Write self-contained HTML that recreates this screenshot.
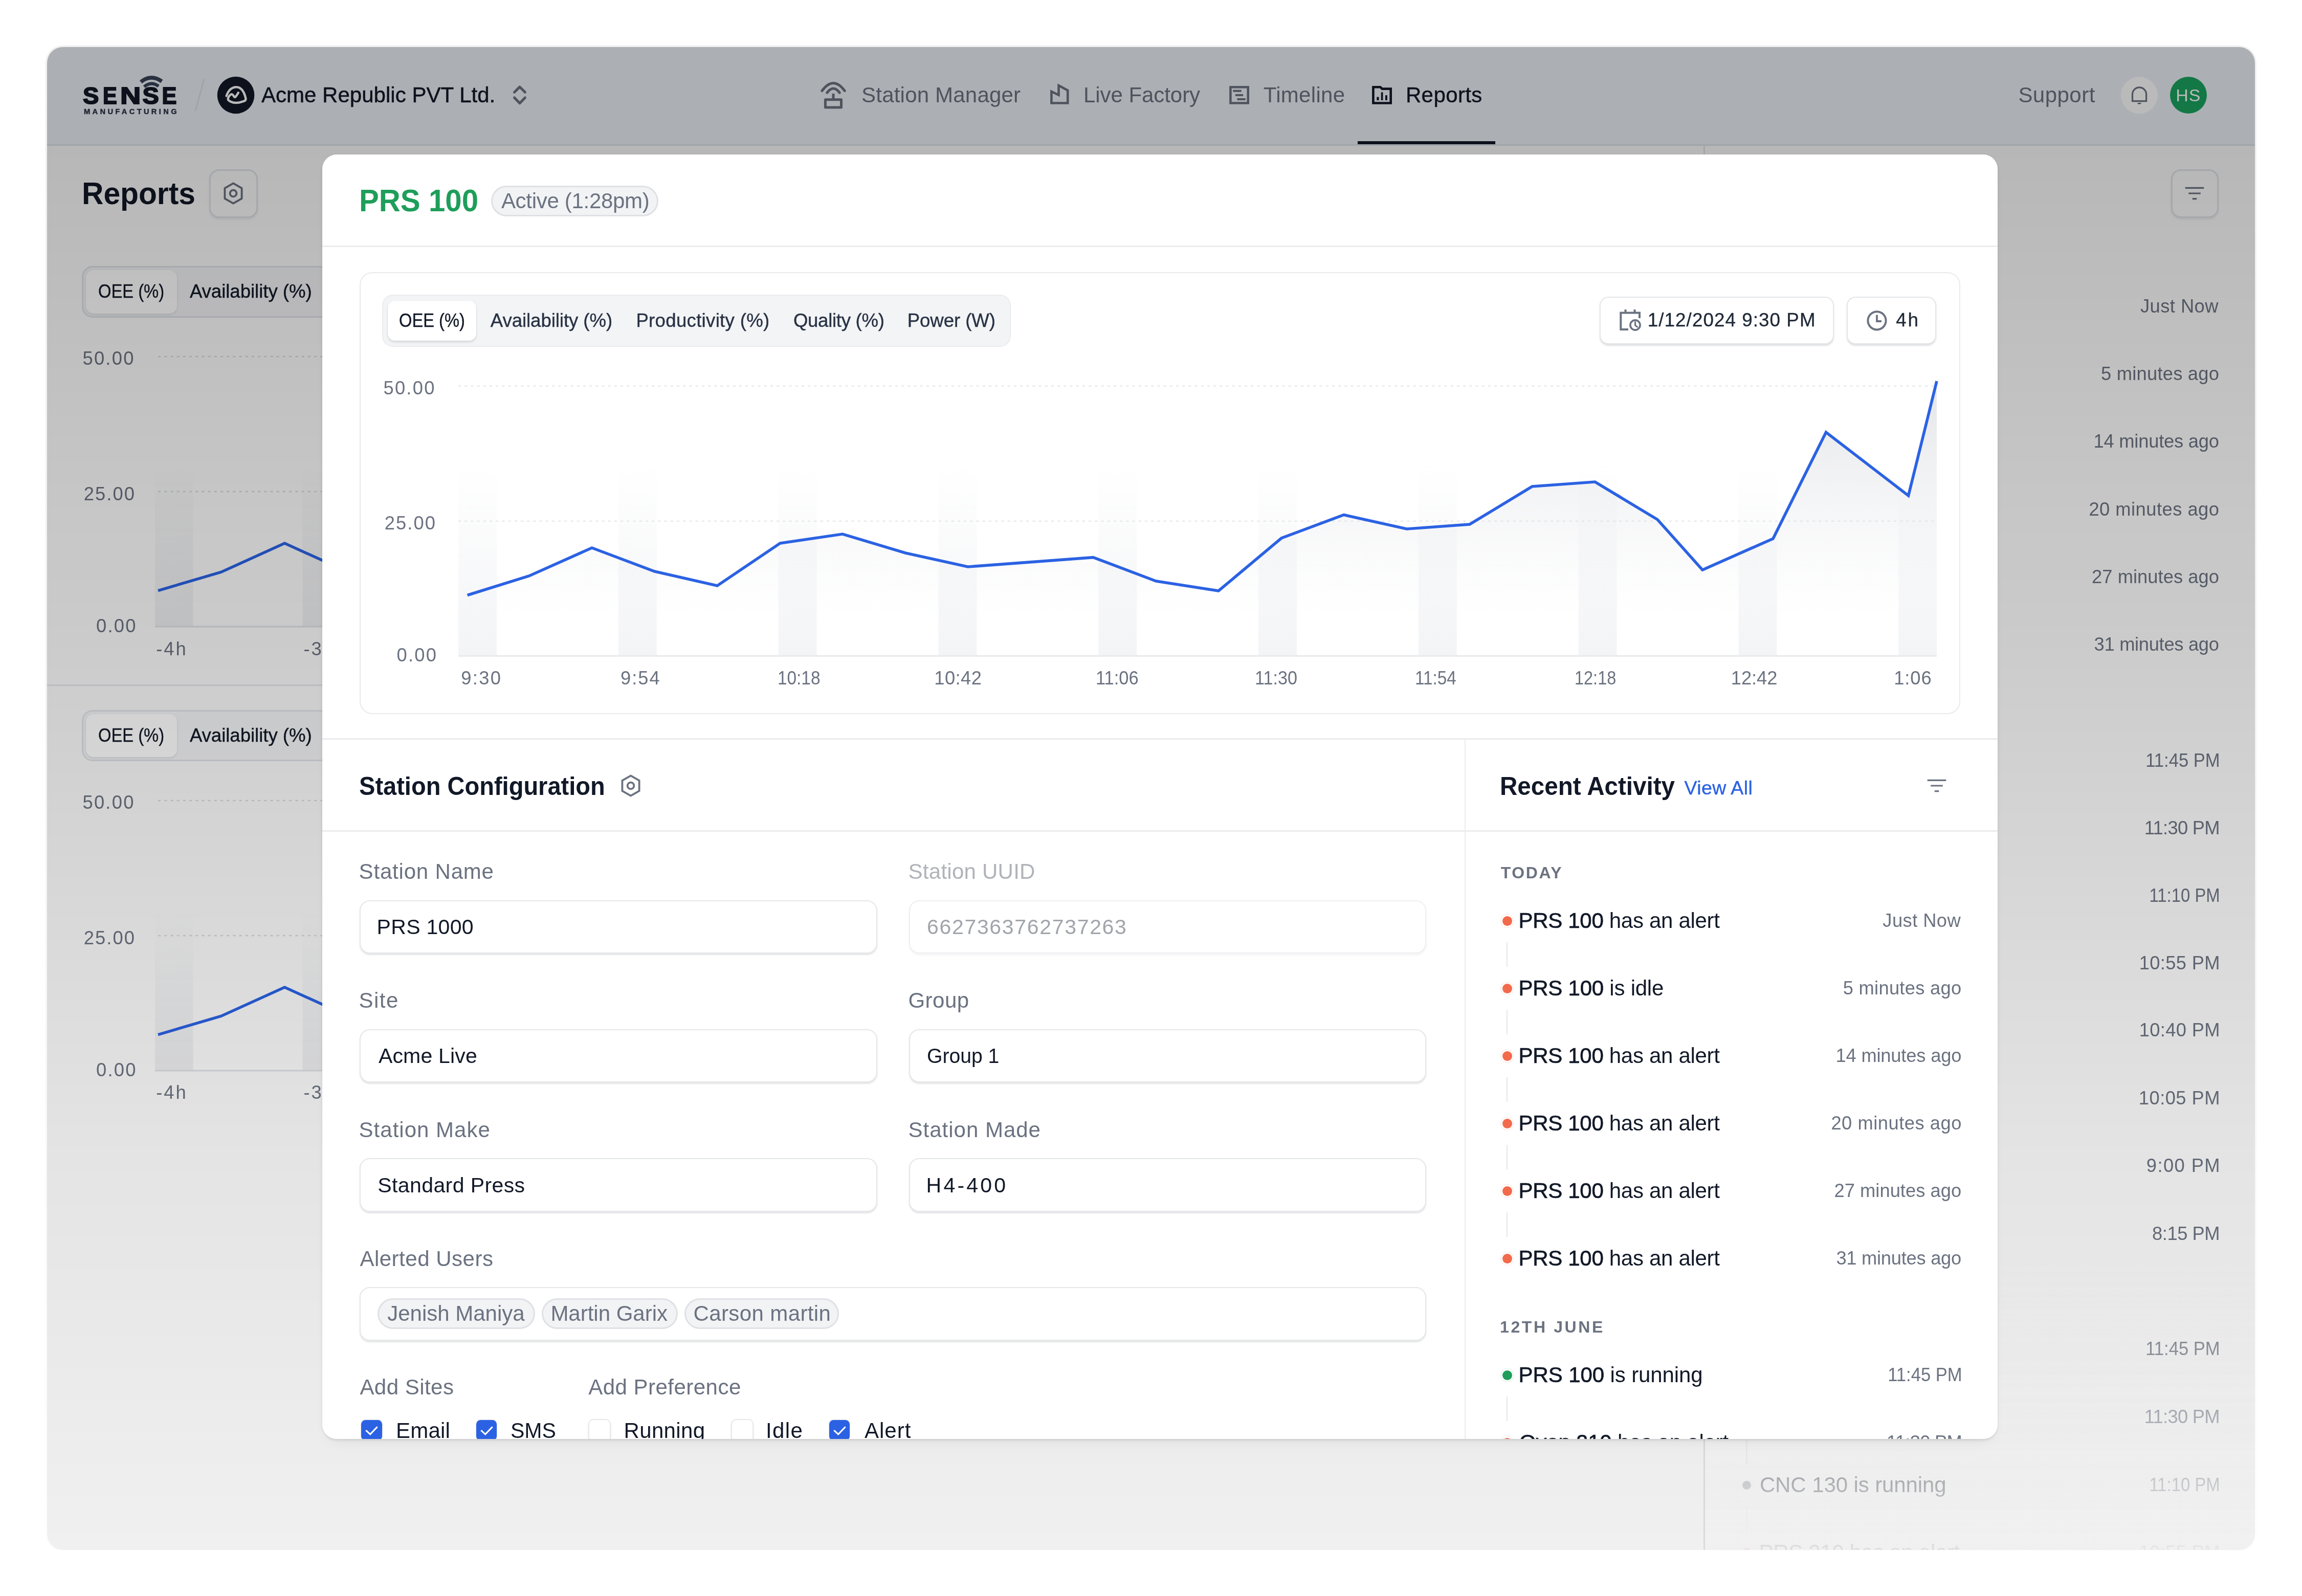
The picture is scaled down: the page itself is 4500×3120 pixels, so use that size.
<!DOCTYPE html>
<html><head><meta charset="utf-8"><title>Reports</title>
<style>
html,body{margin:0;padding:0}
body{width:4500px;height:3120px;background:#fff;position:relative;overflow:hidden;font-family:"Liberation Sans",sans-serif}
#app,#modal{position:absolute;overflow:hidden;will-change:transform}
#ring{position:absolute;left:89px;top:89px;width:4322px;height:2941.5px;border-radius:34px 34px 31px 31px;background:linear-gradient(to bottom,#efefef 0%,#f1f1f1 40%,#f8f8f8 75%,#fdfdfd 100%)}
#app{left:92px;top:92px;width:4316px;height:2938px;border-radius:31px;background:#fff}
#modal{left:630px;top:302px;width:3275px;height:2511px;border-radius:28px;background:#fff}
#mshadow{position:absolute;left:630px;top:302px;width:3275px;height:2511px;border-radius:28px;box-shadow:0 2.5px 5px rgba(0,0,0,.10),0 16px 30px -14px rgba(0,0,0,.07)}
#app>div,#app>span,#app>svg,#modal>div,#modal>span,#modal>svg{position:absolute;box-sizing:border-box}
span{white-space:pre;display:block}
svg{overflow:visible}
</style></head><body>
<div id="ring"></div>
<div id="app">
<div style="left:0.0px;top:0.0px;width:4316.0px;height:189.6px;background:#ecf2f7;border-bottom:3px solid #dde2e9;box-sizing:content-box"></div>
<svg style="left:58.0px;top:48.0px;" width="210.0" height="90.0" viewBox="150.0 140.0 210.0 90.0"><g fill="#111827" stroke="#111827" stroke-width="2" stroke-linejoin="miter" font-family='"Liberation Sans",sans-serif' font-weight="700"><text transform="translate(162.0,202.9) scale(1.03,1)" font-size="45.6">S</text><text transform="translate(201.1,202.9) scale(0.912,1)" font-size="45.6">E</text><text transform="translate(234.9,202.9) scale(1.222,1)" font-size="45.6">N</text><text transform="translate(278.6,202.9) scale(1.062,1)" font-size="45.6">S</text><text transform="translate(316.6,202.9) scale(0.95,1)" font-size="45.6">E</text></g>
<g font-family='"Liberation Sans",sans-serif' font-weight="700"><text x="164" y="222.6" font-size="14.6" textLength="181.5" lengthAdjust="spacing" fill="#2b3345" stroke="#2b3345" stroke-width="0.45">MANUFACTURING</text></g>
<g fill="none" stroke="#3a445a" stroke-linecap="butt">
<path d="M275.3,160.2 Q295.5,144.2 316.2,159.2" stroke-width="7.6"/>
<path d="M281.8,169.6 Q295.5,158 310,168.6" stroke-width="6.2"/>
</g></svg>
<svg style="left:283.0px;top:58.0px;" width="30.0" height="72.0" viewBox="375.0 150.0 30.0 72.0"><line x1="399" y1="154.5" x2="382" y2="217" stroke="#d9dee6" stroke-width="2.5"/></svg>
<svg style="left:328.0px;top:53.0px;" width="82.0" height="82.0" viewBox="420.0 145.0 82.0 82.0"><circle cx="461" cy="186" r="36.3" fill="#111827"/>
<path d="M442.6,187.6 C446,178 452,170.3 462,170.3 C472,170.3 477.5,180 480.4,192.6 C481,195.5 478,197.6 474,198.6 C466,201.4 457,201.6 451,198.7 C447.5,197 445,194.8 445.7,192.6 C447,188.8 449.8,185.2 452.2,184.2 C454.2,183.6 455.2,185.4 456.5,187.2 C457.8,189.2 458.8,190.6 460,189.6 C462.2,187.4 464,184.2 465.9,181.2" fill="none" stroke="#fff" stroke-width="4.4" stroke-linecap="round" stroke-linejoin="round"/></svg>
<span style="left:418.9px;top:73.1px;font-size:42px;line-height:42px;color:#111827;letter-spacing:0.03px;-webkit-text-stroke:0.5px #111827;">Acme Republic PVT Ltd.</span>
<svg style="left:908.0px;top:68.0px;" width="32.0" height="52.0" viewBox="1000.0 160.0 32.0 52.0"><path d="M1005.5,180.3 L1016,169.9 L1026.4,180.3 M1005.5,191 L1016,201.8 L1026.4,191" fill="none" stroke="#6b7280" stroke-width="5" stroke-linecap="round" stroke-linejoin="round"/></svg>
<svg style="left:1506.0px;top:60.0px;" width="62.0" height="66.0" viewBox="1598.0 152.0 62.0 66.0"><g fill="none" stroke="#6b7280" stroke-width="5">
<path d="M1606.9,177.6 Q1629,147.4 1651.2,177.6" stroke-linecap="round"/>
<path d="M1616.8,181.2 Q1629,165 1641.2,181.2" stroke-linecap="round"/>
<path d="M1629,183 V194"/>
<rect x="1613.4" y="194.7" width="31.1" height="15.3" stroke-linejoin="round"/></g></svg>
<span style="left:1592.1px;top:73.1px;font-size:42px;line-height:42px;color:#6b7280;letter-spacing:0.20px;">Station Manager</span>
<svg style="left:1954.0px;top:66.0px;" width="50.0" height="52.0" viewBox="2046.0 158.0 50.0 52.0"><path d="M2055.4,178.9 V201.5 H2087.2 V176.7 L2069.5,167.1 V185.7 Z" fill="none" stroke="#6b7280" stroke-width="4.6" stroke-linejoin="miter"/></svg>
<span style="left:2026.0px;top:73.1px;font-size:42px;line-height:42px;color:#6b7280;letter-spacing:-0.06px;">Live Factory</span>
<svg style="left:2306.0px;top:70.0px;" width="50.0" height="46.0" viewBox="2398.0 162.0 50.0 46.0"><g fill="none" stroke="#6b7280" stroke-width="4.5"><rect x="2405.4" y="170.3" width="34.3" height="31.2"/>
<path d="M2410.3,177.8 H2426.7 M2414.9,186 H2430.1 M2418.4,194 H2434.7" stroke-width="4"/></g></svg>
<span style="left:2377.8px;top:73.1px;font-size:42px;line-height:42px;color:#6b7280;letter-spacing:0.30px;">Timeline</span>
<svg style="left:2584.0px;top:70.0px;" width="52.0" height="46.0" viewBox="2676.0 162.0 52.0 46.0"><path d="M2684.4,170.2 H2698.4 L2701.7,173.6 H2718.7 V201.5 H2684.4 Z" fill="none" stroke="#111827" stroke-width="4.6" stroke-linejoin="miter"/>
<g fill="#111827"><rect x="2691.3" y="189.6" width="4.2" height="6.4"/><rect x="2699.8" y="180.3" width="3.6" height="15.7"/><rect x="2708" y="186.2" width="3.9" height="9.8"/></g></svg>
<span style="left:2655.9px;top:73.1px;font-size:42px;line-height:42px;color:#111827;letter-spacing:0.40px;-webkit-text-stroke:0.4px #111827;">Reports</span>
<div style="left:2561.6px;top:184.0px;width:269.4px;height:6.0px;background:#111827"></div>
<span style="left:3853.4px;top:73.1px;font-size:42px;line-height:42px;color:#6b7280;letter-spacing:0.47px;">Support</span>
<svg style="left:4048.0px;top:53.0px;" width="85.0" height="85.0" viewBox="4140.0 145.0 85.0 85.0"><circle cx="4181.8" cy="186.3" r="36" fill="#ffffff"/>
<path d="M4168.5,197.6 V184.4 A13.55,13.55 0 0 1 4195.6,184.4 V197.6 Z" fill="none" stroke="#6b7280" stroke-width="3.2" stroke-linejoin="miter"/>
<path d="M4177.6,201.2 H4186.4 Q4182,206.5 4177.6,201.2 Z" fill="#4b5563"/></svg>
<div style="left:4150.0px;top:58.0px;width:72.0px;height:72.0px;background:#1ba561;border-radius:50%"></div>
<span style="left:4161.2px;top:77.0px;font-size:34px;line-height:34px;color:#fff;letter-spacing:1.08px;">HS</span>
<div style="left:0.0px;top:192.6px;width:4316.0px;height:2745.4px;background:#fbfbfb"></div>
<span style="left:68.4px;top:256.4px;font-size:61px;line-height:61px;color:#111827;font-weight:700;transform:scaleX(0.9631);transform-origin:left center;">Reports</span>
<div style="left:316.5px;top:238.5px;width:95.0px;height:95.0px;border:3px solid #dfe3e9;border-radius:19px;box-shadow:0 3px 4px rgba(16,24,40,.07);background:#fbfbfb"></div>
<svg style="left:338.0px;top:258.0px;" width="52.0" height="56.0" viewBox="430.0 350.0 52.0 56.0"><path d="M456.0,358.4 L472.6,367.8 L472.6,388.2 L456.0,397.6 L439.4,388.2 L439.4,367.8 Z" fill="none" stroke="#6b7280" stroke-width="3.8" stroke-linejoin="miter"/><circle cx="456" cy="378" r="6.4" fill="none" stroke="#6b7280" stroke-width="3.8"/></svg>
<div style="left:68.0px;top:428.0px;width:1240.0px;height:100.5px;background:#f3f4f6;border:3px solid #dde1e7;border-radius:21px"></div>
<div style="left:76.0px;top:436.0px;width:178.0px;height:84.5px;background:#fff;border-radius:15px;box-shadow:0 2px 5px rgba(16,24,40,.10)"></div>
<span style="left:100.4px;top:460.0px;font-size:36.6px;line-height:36.6px;color:#111827;transform:scaleX(0.8942);transform-origin:left center;-webkit-text-stroke:0.4px #111827;">OEE (%)</span>
<span style="left:278.9px;top:460.0px;font-size:36.6px;line-height:36.6px;color:#111827;letter-spacing:-0.03px;-webkit-text-stroke:0.4px #111827;">Availability (%)</span>
<span style="left:69.5px;top:591.3px;font-size:36.3px;line-height:36.3px;color:#6b7280;letter-spacing:2.25px;">50.00</span>
<span style="left:71.7px;top:856.0px;font-size:36.3px;line-height:36.3px;color:#6b7280;letter-spacing:2.09px;">25.00</span>
<span style="left:96.0px;top:1114.3px;font-size:36.3px;line-height:36.3px;color:#6b7280;letter-spacing:2.23px;">0.00</span>
<span style="left:213.2px;top:1158.8px;font-size:36.3px;line-height:36.3px;color:#6b7280;letter-spacing:2.99px;">-4h</span>
<span style="left:501.4px;top:1158.8px;font-size:36.3px;line-height:36.3px;color:#6b7280;letter-spacing:2.99px;">-3h</span>
<svg style="left:203.0px;top:588.0px;" width="1110.0" height="555.0" viewBox="295.0 680.0 1110.0 555.0"><defs><linearGradient id="bgs0" gradientUnits="userSpaceOnUse" x1="0" y1="905" x2="0" y2="1225"><stop offset="0" stop-color="#ecedef" stop-opacity="0"/><stop offset="1" stop-color="#ecedef" stop-opacity="1"/></linearGradient></defs>
<rect x="303" y="905" width="74.5" height="320" fill="url(#bgs0)"/>
<rect x="591.5" y="905" width="74.5" height="320" fill="url(#bgs0)"/>
<path d="M309,697 H1400 M309,961 H1400" stroke="#d5d8dd" stroke-width="2.5" stroke-dasharray="5 7.2" fill="none"/>
<path d="M303,1225 H1400" stroke="#dcdfe4" stroke-width="3" fill="none"/>
<path d="M309,1154.6 L432,1118.5 L556.4,1062 L680,1118" stroke="#2b62e3" stroke-width="5.5" fill="none" stroke-linejoin="miter"/></svg>
<div style="left:0.0px;top:1246.0px;width:3239.0px;height:2.5px;background:#e3e5e9"></div>
<div style="left:68.0px;top:1295.5px;width:1240.0px;height:100.5px;background:#f3f4f6;border:3px solid #dde1e7;border-radius:21px"></div>
<div style="left:76.0px;top:1303.5px;width:178.0px;height:84.5px;background:#fff;border-radius:15px;box-shadow:0 2px 5px rgba(16,24,40,.10)"></div>
<span style="left:100.4px;top:1327.5px;font-size:36.6px;line-height:36.6px;color:#111827;transform:scaleX(0.8942);transform-origin:left center;-webkit-text-stroke:0.4px #111827;">OEE (%)</span>
<span style="left:278.9px;top:1327.5px;font-size:36.6px;line-height:36.6px;color:#111827;letter-spacing:-0.03px;-webkit-text-stroke:0.4px #111827;">Availability (%)</span>
<span style="left:69.5px;top:1458.8px;font-size:36.3px;line-height:36.3px;color:#6b7280;letter-spacing:2.25px;">50.00</span>
<span style="left:71.7px;top:1723.5px;font-size:36.3px;line-height:36.3px;color:#6b7280;letter-spacing:2.09px;">25.00</span>
<span style="left:96.0px;top:1981.8px;font-size:36.3px;line-height:36.3px;color:#6b7280;letter-spacing:2.23px;">0.00</span>
<span style="left:213.2px;top:2026.3px;font-size:36.3px;line-height:36.3px;color:#6b7280;letter-spacing:2.99px;">-4h</span>
<span style="left:501.4px;top:2026.3px;font-size:36.3px;line-height:36.3px;color:#6b7280;letter-spacing:2.99px;">-3h</span>
<svg style="left:203.0px;top:1455.5px;" width="1110.0" height="555.0" viewBox="295.0 1547.5 1110.0 555.0"><defs><linearGradient id="bgs867.5" gradientUnits="userSpaceOnUse" x1="0" y1="1772.5" x2="0" y2="2092.5"><stop offset="0" stop-color="#ecedef" stop-opacity="0"/><stop offset="1" stop-color="#ecedef" stop-opacity="1"/></linearGradient></defs>
<rect x="303" y="1772.5" width="74.5" height="320" fill="url(#bgs867.5)"/>
<rect x="591.5" y="1772.5" width="74.5" height="320" fill="url(#bgs867.5)"/>
<path d="M309,1564.5 H1400 M309,1828.5 H1400" stroke="#d5d8dd" stroke-width="2.5" stroke-dasharray="5 7.2" fill="none"/>
<path d="M303,2092.5 H1400" stroke="#dcdfe4" stroke-width="3" fill="none"/>
<path d="M309,2022.1 L432,1986.0 L556.4,1929.5 L680,1985.5" stroke="#2b62e3" stroke-width="5.5" fill="none" stroke-linejoin="miter"/></svg>
<div style="left:3238.0px;top:192.6px;width:2.5px;height:2745.4px;background:#e3e5e9"></div>
<div style="left:4151.5px;top:238.5px;width:93.5px;height:95.0px;border:3px solid #dfe3e9;border-radius:19px;box-shadow:0 3px 4px rgba(16,24,40,.07);background:#fbfbfb"></div>
<svg style="left:4176.3px;top:269.8px;" width="44.0" height="32.0" viewBox="4268.3 361.8 44.0 32.0"><path d="M4272.0,367.2 H4308.6 M4278.5,377.8 H4302.1 M4286.1,388.40000000000003 H4294.5" stroke="#6b7280" stroke-width="3.2" fill="none"/></svg>
<span style="left:4092.0px;top:488.9px;font-size:36.3px;line-height:36.3px;color:#6b7280;letter-spacing:0.45px;">Just Now</span>
<span style="left:4015.0px;top:620.9px;font-size:36.3px;line-height:36.3px;color:#6b7280;letter-spacing:0.24px;">5 minutes ago</span>
<span style="left:4000.5px;top:753.4px;font-size:36.3px;line-height:36.3px;color:#6b7280;letter-spacing:-0.21px;">14 minutes ago</span>
<span style="left:3991.4px;top:885.6px;font-size:36.3px;line-height:36.3px;color:#6b7280;letter-spacing:0.49px;">20 minutes ago</span>
<span style="left:3997.1px;top:1017.9px;font-size:36.3px;line-height:36.3px;color:#6b7280;letter-spacing:0.05px;">27 minutes ago</span>
<span style="left:4001.6px;top:1149.9px;font-size:36.3px;line-height:36.3px;color:#6b7280;letter-spacing:-0.30px;">31 minutes ago</span>
<span style="left:4094.7px;top:1376.9px;font-size:36.3px;line-height:36.3px;color:#6b7280;transform:scaleX(0.9528);transform-origin:right center;">11:45 PM</span>
<span style="left:4099.8px;top:1508.9px;font-size:36.3px;line-height:36.3px;color:#6b7280;letter-spacing:-0.71px;">11:30 PM</span>
<span style="left:4094.6px;top:1640.6px;font-size:36.3px;line-height:36.3px;color:#6b7280;transform:scaleX(0.9052);transform-origin:right center;">11:10 PM</span>
<span style="left:4089.8px;top:1772.9px;font-size:36.3px;line-height:36.3px;color:#6b7280;letter-spacing:0.34px;">10:55 PM</span>
<span style="left:4089.8px;top:1904.3px;font-size:36.3px;line-height:36.3px;color:#6b7280;letter-spacing:0.34px;">10:40 PM</span>
<span style="left:4088.8px;top:2036.9px;font-size:36.3px;line-height:36.3px;color:#6b7280;letter-spacing:0.48px;">10:05 PM</span>
<span style="left:4103.8px;top:2168.6px;font-size:36.3px;line-height:36.3px;color:#6b7280;letter-spacing:1.42px;">9:00 PM</span>
<span style="left:4115.0px;top:2301.5px;font-size:36.3px;line-height:36.3px;color:#6b7280;letter-spacing:-0.44px;">8:15 PM</span>
<span style="left:4094.7px;top:2526.9px;font-size:36.3px;line-height:36.3px;color:#6b7280;transform:scaleX(0.9528);transform-origin:right center;">11:45 PM</span>
<span style="left:4099.8px;top:2659.9px;font-size:36.3px;line-height:36.3px;color:#6b7280;letter-spacing:-0.71px;">11:30 PM</span>
<span style="left:4094.6px;top:2792.9px;font-size:36.3px;line-height:36.3px;color:#6b7280;transform:scaleX(0.9052);transform-origin:right center;">11:10 PM</span>
<span style="left:4089.8px;top:2924.9px;font-size:36.3px;line-height:36.3px;color:#6b7280;letter-spacing:0.34px;">10:55 PM</span>
<div style="left:3321.0px;top:2723.0px;width:2.5px;height:47.0px;background:#e5e7eb"></div>
<div style="left:3313.5px;top:2802.5px;width:17.0px;height:17.0px;background:#7d828a;border-radius:50%"></div>
<span style="left:3347.9px;top:2790.4px;font-size:42px;line-height:42px;color:#111827;letter-spacing:-0.10px;">CNC 130 is running</span>
<div style="left:3321.0px;top:2853.0px;width:2.5px;height:48.0px;background:#e5e7eb"></div>
<div style="left:3312.5px;top:2933.5px;width:19.0px;height:19.0px;background:#f26a4b;border-radius:50%"></div>
<span style="left:3346.5px;top:2922.4px;font-size:42px;line-height:42px;color:#111827;letter-spacing:-0.34px;">PRS 210 has an alert</span>
<div style="left:3241.0px;top:2378.0px;width:1075.0px;height:560.0px;background:linear-gradient(to bottom,rgba(251,251,251,0) 0%,rgba(251,251,251,.92) 100%)"></div>
<div style="left:0.0px;top:0.0px;width:4316.0px;height:192.6px;background:rgba(0,0,0,.27)"></div>
<div style="left:0.0px;top:192.6px;width:4316.0px;height:2745.4px;background:linear-gradient(to bottom,rgba(0,0,0,.27) 0%,rgba(0,0,0,.187) 35%,rgba(0,0,0,.092) 72%,rgba(0,0,0,.052) 95%,rgba(0,0,0,.045) 100%)"></div>
</div>
<div id="mshadow"></div>
<div id="modal">
<span style="left:72.1px;top:60.4px;font-size:61px;line-height:61px;color:#1e9e5a;font-weight:700;transform:scaleX(0.9544);transform-origin:left center;">PRS 100</span>
<div style="left:329.5px;top:61.0px;width:327.5px;height:59.5px;background:#f2f3f5;border:3px solid #dfe1e5;border-radius:30px"></div>
<span style="left:349.9px;top:70.0px;font-size:42px;line-height:42px;color:#6b7280;letter-spacing:-0.30px;">Active (1:28pm)</span>
<div style="left:0.0px;top:178.3px;width:3275.0px;height:2.5px;background:#ececee"></div>
<div style="left:73.0px;top:230.0px;width:3129.0px;height:864.0px;border:2.5px solid #e9eaec;border-radius:25px"></div>
<div style="left:117.0px;top:274.4px;width:1229.0px;height:101.3px;background:#f3f4f6;border:2.5px solid #ebecef;border-radius:21px"></div>
<div style="left:128.4px;top:286.0px;width:172.4px;height:77.7px;background:#fff;border-radius:14px;box-shadow:0 3px 4px rgba(16,24,40,.13),0 0 0 1px rgba(16,24,40,.03)"></div>
<span style="left:150.4px;top:306.8px;font-size:36.6px;line-height:36.6px;color:#111827;transform:scaleX(0.8928);transform-origin:left center;-webkit-text-stroke:0.4px #111827;">OEE (%)</span>
<span style="left:328.8px;top:306.8px;font-size:36.6px;line-height:36.6px;color:#283244;letter-spacing:-0.06px;-webkit-text-stroke:0.4px #283244;">Availability (%)</span>
<span style="left:613.4px;top:306.8px;font-size:36.6px;line-height:36.6px;color:#283244;letter-spacing:0.31px;-webkit-text-stroke:0.4px #283244;">Productivity (%)</span>
<span style="left:920.9px;top:306.8px;font-size:36.6px;line-height:36.6px;color:#283244;letter-spacing:-0.29px;-webkit-text-stroke:0.4px #283244;">Quality (%)</span>
<span style="left:1143.7px;top:306.8px;font-size:36.6px;line-height:36.6px;color:#283244;letter-spacing:-0.06px;-webkit-text-stroke:0.4px #283244;">Power (W)</span>
<div style="left:2496.5px;top:277.8px;width:458.0px;height:93.2px;background:#fff;border:2.5px solid #e4e6e9;border-radius:17px;box-shadow:0 2.5px 3px rgba(16,24,40,.13)"></div>
<div style="left:2980.2px;top:277.8px;width:174.8px;height:93.2px;background:#fff;border:2.5px solid #e4e6e9;border-radius:17px;box-shadow:0 2.5px 3px rgba(16,24,40,.13)"></div>
<svg style="left:2530.0px;top:296.0px;" width="54.0" height="54.0" viewBox="3160.0 598.0 54.0 54.0"><g fill="none" stroke="#6b7280" stroke-width="4">
<path d="M3183,644 H3168.3 V611.5 H3205 V622"/>
<path d="M3177.5,605 V613 M3195.5,605 V613" stroke-linecap="butt"/>
<circle cx="3196.5" cy="635.5" r="9.6" stroke-width="3.6"/>
<path d="M3196.5,629.5 V636 L3200.5,639" stroke-width="3" stroke-linecap="round" stroke-linejoin="round"/></g></svg>
<span style="left:2590.8px;top:306.4px;font-size:36.8px;line-height:36.8px;color:#1f2937;letter-spacing:1.05px;-webkit-text-stroke:0.35px #1f2937;">1/12/2024 9:30 PM</span>
<svg style="left:3015.0px;top:301.0px;" width="48.0" height="48.0" viewBox="3645.0 603.0 48.0 48.0"><g fill="none" stroke="#6b7280" stroke-width="4"><circle cx="3669" cy="626.8" r="17.6"/><path d="M3669,615.5 V628 H3678" stroke-width="3.8" stroke-linejoin="miter"/></g></svg>
<span style="left:3076.2px;top:306.4px;font-size:36.8px;line-height:36.8px;color:#1f2937;letter-spacing:2.73px;-webkit-text-stroke:0.35px #1f2937;">4h</span>
<span style="left:119.5px;top:439.3px;font-size:36.3px;line-height:36.3px;color:#6b7280;letter-spacing:2.25px;">50.00</span>
<span style="left:121.7px;top:702.6px;font-size:36.3px;line-height:36.3px;color:#6b7280;letter-spacing:2.09px;">25.00</span>
<span style="left:145.5px;top:960.8px;font-size:36.3px;line-height:36.3px;color:#6b7280;letter-spacing:2.23px;">0.00</span>
<svg style="left:260.0px;top:433.0px;" width="2905.0" height="555.0" viewBox="890.0 735.0 2905.0 555.0"><defs>
<linearGradient id="st" gradientUnits="userSpaceOnUse" x1="0" y1="905" x2="0" y2="1282"><stop offset="0" stop-color="#f3f4f6" stop-opacity="0"/><stop offset="1" stop-color="#f3f4f6" stop-opacity="1"/></linearGradient>
<linearGradient id="ar" gradientUnits="userSpaceOnUse" x1="0" y1="745" x2="0" y2="1200"><stop offset="0" stop-color="#d2d3d7" stop-opacity=".60"/><stop offset="1" stop-color="#e5e7eb" stop-opacity="0"/></linearGradient></defs>
<rect x="896.0" y="905" width="75" height="377" fill="url(#st)"/><rect x="1208.8" y="905" width="75" height="377" fill="url(#st)"/><rect x="1521.6" y="905" width="75" height="377" fill="url(#st)"/><rect x="1834.4" y="905" width="75" height="377" fill="url(#st)"/><rect x="2147.2" y="905" width="75" height="377" fill="url(#st)"/><rect x="2460.0" y="905" width="75" height="377" fill="url(#st)"/><rect x="2772.8" y="905" width="75" height="377" fill="url(#st)"/><rect x="3085.6" y="905" width="75" height="377" fill="url(#st)"/><rect x="3398.4" y="905" width="75" height="377" fill="url(#st)"/><rect x="3711.2" y="905" width="75" height="377" fill="url(#st)"/>
<path d="M896,754.4 H3786 M896,1018.8 H3786" stroke="#e8e9ec" stroke-width="2.5" stroke-dasharray="5 7.2" fill="none"/>
<polygon points="913.6,1163.5 1034,1126 1157,1071 1279.6,1117 1402,1145 1525,1062 1647,1044 1770,1081 1892,1108 2137,1089.6 2260,1136 2382,1155 2505,1052 2627,1006.5 2750,1034 2873,1025 2995,951 3118,942 3240,1015.7 3328,1114 3466,1053 3569.5,845 3730.6,969 3786,745 3786,1282 913.6,1282" fill="url(#ar)"/>
<path d="M896,1282.3 H3786" stroke="#e8e9ec" stroke-width="3" fill="none"/>
<polyline points="913.6,1163.5 1034,1126 1157,1071 1279.6,1117 1402,1145 1525,1062 1647,1044 1770,1081 1892,1108 2137,1089.6 2260,1136 2382,1155 2505,1052 2627,1006.5 2750,1034 2873,1025 2995,951 3118,942 3240,1015.7 3328,1114 3466,1053 3569.5,845 3730.6,969 3786,745" fill="none" stroke="#2b62e3" stroke-width="5.6" stroke-linejoin="miter" stroke-miterlimit="3"/></svg>
<span style="left:271.3px;top:1005.8px;font-size:36.3px;line-height:36.3px;color:#6b7280;letter-spacing:2.36px;">9:30</span>
<span style="left:583.1px;top:1005.8px;font-size:36.3px;line-height:36.3px;color:#6b7280;letter-spacing:2.00px;">9:54</span>
<span style="left:889.9px;top:1005.8px;font-size:36.3px;line-height:36.3px;color:#6b7280;transform:scaleX(0.9187);transform-origin:left center;">10:18</span>
<span style="left:1196.3px;top:1005.8px;font-size:36.3px;line-height:36.3px;color:#6b7280;letter-spacing:0.43px;">10:42</span>
<span style="left:1512.4px;top:1005.8px;font-size:36.3px;line-height:36.3px;color:#6b7280;transform:scaleX(0.9483);transform-origin:left center;">11:06</span>
<span style="left:1823.4px;top:1005.8px;font-size:36.3px;line-height:36.3px;color:#6b7280;transform:scaleX(0.9403);transform-origin:left center;">11:30</span>
<span style="left:2136.1px;top:1005.8px;font-size:36.3px;line-height:36.3px;color:#6b7280;transform:scaleX(0.9173);transform-origin:left center;">11:54</span>
<span style="left:2448.0px;top:1005.8px;font-size:36.3px;line-height:36.3px;color:#6b7280;transform:scaleX(0.8944);transform-origin:left center;">12:18</span>
<span style="left:2753.8px;top:1005.8px;font-size:36.3px;line-height:36.3px;color:#6b7280;letter-spacing:-0.07px;">12:42</span>
<span style="left:3072.3px;top:1005.8px;font-size:36.3px;line-height:36.3px;color:#6b7280;letter-spacing:0.88px;">1:06</span>
<div style="left:0.0px;top:1141.0px;width:3275.0px;height:2.5px;background:#ececee"></div>
<div style="left:2232.5px;top:1143.0px;width:2.5px;height:1368.0px;background:#ececee"></div>
<div style="left:0.0px;top:1321.0px;width:3275.0px;height:2.5px;background:#ececee"></div>
<span style="left:72.3px;top:1209.7px;font-size:50px;line-height:50px;color:#111827;font-weight:700;transform:scaleX(0.9408);transform-origin:left center;">Station Configuration</span>
<svg style="left:576.8px;top:1206.0px;" width="52.0" height="56.0" viewBox="1206.8 1508.0 52.0 56.0"><path d="M1232.8,1516.4 L1249.4,1525.8 L1249.4,1546.2 L1232.8,1555.6 L1216.2,1546.2 L1216.2,1525.8 Z" fill="none" stroke="#6b7280" stroke-width="3.8" stroke-linejoin="miter"/><circle cx="1232.8" cy="1536" r="6.4" fill="none" stroke="#6b7280" stroke-width="3.8"/></svg>
<span style="left:2301.8px;top:1209.7px;font-size:50px;line-height:50px;color:#111827;font-weight:700;transform:scaleX(0.9517);transform-origin:left center;">Recent Activity</span>
<span style="left:2662.5px;top:1220.2px;font-size:37.5px;line-height:37.5px;color:#2b62e3;letter-spacing:0.37px;-webkit-text-stroke:0.4px #2b62e3;">View All</span>
<svg style="left:3133.8px;top:1217.5px;" width="44.0" height="32.0" viewBox="3763.8 1519.5 44.0 32.0"><path d="M3767.5,1524.9 H3804.1000000000004 M3774.0,1535.5 H3797.6000000000004 M3781.6000000000004,1546.1 H3790.0" stroke="#6b7280" stroke-width="3.2" fill="none"/></svg>
<span style="left:71.6px;top:1381.4px;font-size:42px;line-height:42px;color:#6b7280;letter-spacing:0.81px;">Station Name</span>
<div style="left:73.0px;top:1457.7px;width:1012.0px;height:104.6px;background:#fff;border:2.5px solid #e6e7ea;border-radius:20px;box-shadow:0 2.5px 3px rgba(16,24,40,.11)"></div>
<span style="left:106.6px;top:1490.3px;font-size:41px;line-height:41px;color:#111827;letter-spacing:0.29px;">PRS 1000</span>
<span style="left:1145.6px;top:1381.4px;font-size:42px;line-height:42px;color:#b0b3b9;letter-spacing:0.25px;">Station UUID</span>
<div style="left:1147.0px;top:1457.7px;width:1011.0px;height:104.6px;background:#fff;border:2.5px solid #eeeff1;border-radius:20px;box-shadow:0 3px 5px rgba(16,24,40,.05)"></div>
<span style="left:1182.0px;top:1490.3px;font-size:41px;line-height:41px;color:#a1a5ab;letter-spacing:1.67px;">6627363762737263</span>
<span style="left:71.6px;top:1633.4px;font-size:42px;line-height:42px;color:#6b7280;letter-spacing:1.45px;">Site</span>
<div style="left:73.0px;top:1709.7px;width:1012.0px;height:104.6px;background:#fff;border:2.5px solid #e6e7ea;border-radius:20px;box-shadow:0 2.5px 3px rgba(16,24,40,.11)"></div>
<span style="left:109.9px;top:1742.3px;font-size:41px;line-height:41px;color:#111827;letter-spacing:0.18px;">Acme Live</span>
<span style="left:1145.4px;top:1633.4px;font-size:42px;line-height:42px;color:#6b7280;letter-spacing:0.52px;">Group</span>
<div style="left:1147.0px;top:1709.7px;width:1011.0px;height:104.6px;background:#fff;border:2.5px solid #e6e7ea;border-radius:20px;box-shadow:0 2.5px 3px rgba(16,24,40,.11)"></div>
<span style="left:1182.0px;top:1742.3px;font-size:41px;line-height:41px;color:#111827;transform:scaleX(0.9541);transform-origin:left center;">Group 1</span>
<span style="left:71.6px;top:1885.9px;font-size:42px;line-height:42px;color:#6b7280;letter-spacing:1.01px;">Station Make</span>
<div style="left:73.0px;top:1962.2px;width:1012.0px;height:104.6px;background:#fff;border:2.5px solid #e6e7ea;border-radius:20px;box-shadow:0 2.5px 3px rgba(16,24,40,.11)"></div>
<span style="left:108.2px;top:1994.8px;font-size:41px;line-height:41px;color:#111827;letter-spacing:0.41px;">Standard Press</span>
<span style="left:1145.6px;top:1885.9px;font-size:42px;line-height:42px;color:#6b7280;letter-spacing:0.99px;">Station Made</span>
<div style="left:1147.0px;top:1962.2px;width:1011.0px;height:104.6px;background:#fff;border:2.5px solid #e6e7ea;border-radius:20px;box-shadow:0 2.5px 3px rgba(16,24,40,.11)"></div>
<span style="left:1180.6px;top:1994.8px;font-size:41px;line-height:41px;color:#111827;letter-spacing:4.20px;">H4-400</span>
<span style="left:73.4px;top:2137.9px;font-size:42px;line-height:42px;color:#6b7280;letter-spacing:0.51px;">Alerted Users</span>
<div style="left:73.0px;top:2214.2px;width:2085.0px;height:104.6px;background:#fff;border:2.5px solid #e6e7ea;border-radius:20px;box-shadow:0 2.5px 3px rgba(16,24,40,.11)"></div>
<div style="left:107.5px;top:2236.0px;width:308.6px;height:60.0px;background:#f2f3f5;border:3px solid #dfe1e5;border-radius:30px"></div>
<span style="left:127.3px;top:2244.9px;font-size:42px;line-height:42px;color:#6b7280;letter-spacing:-0.02px;">Jenish Maniya</span>
<div style="left:429.1px;top:2236.0px;width:266.2px;height:60.0px;background:#f2f3f5;border:3px solid #dfe1e5;border-radius:30px"></div>
<span style="left:446.4px;top:2244.9px;font-size:42px;line-height:42px;color:#6b7280;letter-spacing:-0.01px;">Martin Garix</span>
<div style="left:708.3px;top:2236.0px;width:302.2px;height:60.0px;background:#f2f3f5;border:3px solid #dfe1e5;border-radius:30px"></div>
<span style="left:725.5px;top:2244.9px;font-size:42px;line-height:42px;color:#6b7280;letter-spacing:0.39px;">Carson martin</span>
<span style="left:73.4px;top:2388.7px;font-size:42px;line-height:42px;color:#6b7280;letter-spacing:0.47px;">Add Sites</span>
<span style="left:520.3px;top:2388.7px;font-size:42px;line-height:42px;color:#6b7280;letter-spacing:0.47px;">Add Preference</span>
<div style="left:76.0px;top:2473.7px;width:40.5px;height:40.5px;background:#2b62e3;border-radius:8.5px;box-shadow:0 0 0 1.2px rgba(16,24,40,.10)"></div>
<svg style="left:76.0px;top:2473.7px;" width="41.0" height="41.0" viewBox="706.0 2775.7 41.0 41.0"><path d="M715.3,2795.8999999999996 L723.7,2803.5 L737.6,2788.8999999999996" fill="none" stroke="#fff" stroke-width="3.1" stroke-linecap="butt" stroke-linejoin="miter"/></svg>
<span style="left:144.1px;top:2474.0px;font-size:42px;line-height:42px;color:#111827;letter-spacing:0.16px;">Email</span>
<div style="left:300.8px;top:2473.7px;width:40.5px;height:40.5px;background:#2b62e3;border-radius:8.5px;box-shadow:0 0 0 1.2px rgba(16,24,40,.10)"></div>
<svg style="left:300.8px;top:2473.7px;" width="41.0" height="41.0" viewBox="930.8 2775.7 41.0 41.0"><path d="M940.0999999999999,2795.8999999999996 L948.5,2803.5 L962.4,2788.8999999999996" fill="none" stroke="#fff" stroke-width="3.1" stroke-linecap="butt" stroke-linejoin="miter"/></svg>
<span style="left:368.2px;top:2474.0px;font-size:42px;line-height:42px;color:#111827;transform:scaleX(0.9764);transform-origin:left center;">SMS</span>
<div style="left:520.0px;top:2471.7px;width:44.0px;height:45.0px;background:#fff;border:2.5px solid #e7e8eb;border-radius:10px;box-shadow:0 2px 4px rgba(16,24,40,.08)"></div>
<span style="left:589.5px;top:2474.0px;font-size:42px;line-height:42px;color:#111827;letter-spacing:0.35px;">Running</span>
<div style="left:798.5px;top:2471.7px;width:44.0px;height:45.0px;background:#fff;border:2.5px solid #e7e8eb;border-radius:10px;box-shadow:0 2px 4px rgba(16,24,40,.08)"></div>
<span style="left:867.1px;top:2474.0px;font-size:42px;line-height:42px;color:#111827;letter-spacing:1.33px;">Idle</span>
<div style="left:990.8px;top:2473.7px;width:40.5px;height:40.5px;background:#2b62e3;border-radius:8.5px;box-shadow:0 0 0 1.2px rgba(16,24,40,.10)"></div>
<svg style="left:990.8px;top:2473.7px;" width="41.0" height="41.0" viewBox="1620.8 2775.7 41.0 41.0"><path d="M1630.1,2795.8999999999996 L1638.5,2803.5 L1652.3999999999999,2788.8999999999996" fill="none" stroke="#fff" stroke-width="3.1" stroke-linecap="butt" stroke-linejoin="miter"/></svg>
<span style="left:1059.9px;top:2474.0px;font-size:42px;line-height:42px;color:#111827;letter-spacing:1.02px;">Alert</span>
<span style="left:2303.7px;top:1387.9px;font-size:32px;line-height:32px;color:#6b7280;font-weight:700;letter-spacing:2.59px;">TODAY</span>
<div style="left:2306.5px;top:1488.5px;width:19.0px;height:19.0px;background:#f26a4b;border-radius:50%;box-shadow:0 0 0 2.5px rgba(255,255,255,.9),0 0 0 4px rgba(242,106,75,.12)"></div>
<span style="left:2338.5px;top:1477.4px;font-size:42px;line-height:42px;color:#111827;letter-spacing:-0.31px;"><b style="font-weight:400;-webkit-text-stroke:.7px #111827">PRS 100</b> has an alert</span>
<span style="left:3050.3px;top:1479.9px;font-size:36.3px;line-height:36.3px;color:#6b7280;letter-spacing:0.45px;">Just Now</span>
<div style="left:2306.5px;top:1620.5px;width:19.0px;height:19.0px;background:#f26a4b;border-radius:50%;box-shadow:0 0 0 2.5px rgba(255,255,255,.9),0 0 0 4px rgba(242,106,75,.12)"></div>
<span style="left:2338.5px;top:1609.4px;font-size:42px;line-height:42px;color:#111827;letter-spacing:-0.24px;"><b style="font-weight:400;-webkit-text-stroke:.7px #111827">PRS 100</b> is idle</span>
<span style="left:2972.7px;top:1611.9px;font-size:36.3px;line-height:36.3px;color:#6b7280;letter-spacing:0.29px;">5 minutes ago</span>
<div style="left:2306.5px;top:1752.5px;width:19.0px;height:19.0px;background:#f26a4b;border-radius:50%;box-shadow:0 0 0 2.5px rgba(255,255,255,.9),0 0 0 4px rgba(242,106,75,.12)"></div>
<span style="left:2338.5px;top:1741.4px;font-size:42px;line-height:42px;color:#111827;letter-spacing:-0.31px;"><b style="font-weight:400;-webkit-text-stroke:.7px #111827">PRS 100</b> has an alert</span>
<span style="left:2958.5px;top:1743.9px;font-size:36.3px;line-height:36.3px;color:#6b7280;letter-spacing:-0.18px;">14 minutes ago</span>
<div style="left:2306.5px;top:1884.5px;width:19.0px;height:19.0px;background:#f26a4b;border-radius:50%;box-shadow:0 0 0 2.5px rgba(255,255,255,.9),0 0 0 4px rgba(242,106,75,.12)"></div>
<span style="left:2338.5px;top:1873.4px;font-size:42px;line-height:42px;color:#111827;letter-spacing:-0.31px;"><b style="font-weight:400;-webkit-text-stroke:.7px #111827">PRS 100</b> has an alert</span>
<span style="left:2949.4px;top:1875.9px;font-size:36.3px;line-height:36.3px;color:#6b7280;letter-spacing:0.52px;">20 minutes ago</span>
<div style="left:2306.5px;top:2016.5px;width:19.0px;height:19.0px;background:#f26a4b;border-radius:50%;box-shadow:0 0 0 2.5px rgba(255,255,255,.9),0 0 0 4px rgba(242,106,75,.12)"></div>
<span style="left:2338.5px;top:2005.4px;font-size:42px;line-height:42px;color:#111827;letter-spacing:-0.31px;"><b style="font-weight:400;-webkit-text-stroke:.7px #111827">PRS 100</b> has an alert</span>
<span style="left:2955.4px;top:2007.9px;font-size:36.3px;line-height:36.3px;color:#6b7280;letter-spacing:0.05px;">27 minutes ago</span>
<div style="left:2306.5px;top:2148.5px;width:19.0px;height:19.0px;background:#f26a4b;border-radius:50%;box-shadow:0 0 0 2.5px rgba(255,255,255,.9),0 0 0 4px rgba(242,106,75,.12)"></div>
<span style="left:2338.5px;top:2137.4px;font-size:42px;line-height:42px;color:#111827;letter-spacing:-0.31px;"><b style="font-weight:400;-webkit-text-stroke:.7px #111827">PRS 100</b> has an alert</span>
<span style="left:2959.4px;top:2139.9px;font-size:36.3px;line-height:36.3px;color:#6b7280;letter-spacing:-0.26px;">31 minutes ago</span>
<div style="left:2314.7px;top:1540.0px;width:2.5px;height:48.0px;background:#e5e7eb"></div>
<div style="left:2314.7px;top:1672.0px;width:2.5px;height:48.0px;background:#e5e7eb"></div>
<div style="left:2314.7px;top:1804.0px;width:2.5px;height:48.0px;background:#e5e7eb"></div>
<div style="left:2314.7px;top:1936.0px;width:2.5px;height:48.0px;background:#e5e7eb"></div>
<div style="left:2314.7px;top:2068.0px;width:2.5px;height:48.0px;background:#e5e7eb"></div>
<span style="left:2302.0px;top:2275.5px;font-size:32px;line-height:32px;color:#6b7280;font-weight:700;letter-spacing:3.60px;">12TH JUNE</span>
<div style="left:2306.5px;top:2376.5px;width:19.0px;height:19.0px;background:#1e9e5a;border-radius:50%;box-shadow:0 0 0 2.5px rgba(255,255,255,.9),0 0 0 4px rgba(30,158,90,.12)"></div>
<span style="left:2338.5px;top:2365.4px;font-size:42px;line-height:42px;color:#111827;letter-spacing:-0.10px;"><b style="font-weight:400;-webkit-text-stroke:.7px #111827">PRS 100</b> is running</span>
<span style="left:3053.0px;top:2367.9px;font-size:36.3px;line-height:36.3px;color:#6b7280;transform:scaleX(0.9528);transform-origin:right center;">11:45 PM</span>
<div style="left:2314.7px;top:2428.0px;width:2.5px;height:48.0px;background:#e5e7eb"></div>
<div style="left:2306.5px;top:2508.5px;width:19.0px;height:19.0px;background:#f26a4b;border-radius:50%;box-shadow:0 0 0 2.5px rgba(255,255,255,.9),0 0 0 4px rgba(242,106,75,.12)"></div>
<span style="left:2340.0px;top:2497.4px;font-size:42px;line-height:42px;color:#111827;letter-spacing:-0.20px;"><b style="font-weight:400;-webkit-text-stroke:.7px #111827">Oven 210</b> has an alert</span>
<span style="left:3058.1px;top:2499.9px;font-size:36.3px;line-height:36.3px;color:#6b7280;letter-spacing:-0.71px;">11:30 PM</span>
</div>
</body></html>
